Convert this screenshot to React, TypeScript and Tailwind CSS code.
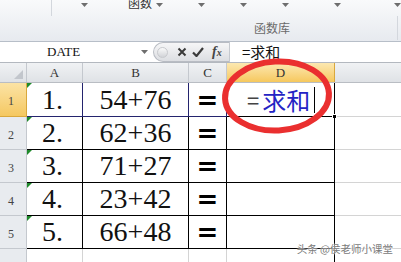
import React from "react";

const rows = [
  { n: "1", a: "1.", b: "54+76" },
  { n: "2", a: "2.", b: "62+36" },
  { n: "3", a: "3.", b: "71+27" },
  { n: "4", a: "4.", b: "23+42" },
  { n: "5", a: "5.", b: "66+48" },
];

const Caret = ({ className = "" }: { className?: string }) => (
  <svg width="7" height="4" viewBox="0 0 7 4" className={className}>
    <path d="M0 0h7L3.5 4z" fill="#6e6e6e" />
  </svg>
);

const GreenTick = () => (
  <svg width="5" height="5" viewBox="0 0 5 5" className="absolute left-0 top-0">
    <path d="M0 0h5L0 5z" fill="#1f8a2c" />
  </svg>
);

export default function App() {
  return (
    <div className="relative w-[401px] h-[262px] overflow-hidden bg-white font-['Liberation_Sans','Noto_Sans_CJK_SC',sans-serif]">
      {/* Ribbon */}
      <div className="h-[42px] border-b border-[#b7bec8] bg-gradient-to-b from-[#f9fafb] to-[#e7eaef]">
        <div className="flex items-start h-[14px]">
          <div className="w-[52px] h-[16px] border-r border-[#d3d7dd]" />
          <div className="ml-[29px] mt-[3px]"><Caret /></div>
          <span className="ml-[40px] -mt-[4px] text-[12px] leading-[14px] text-[#333] font-['Noto_Sans_CJK_SC',sans-serif]">函数</span>
          <div className="ml-[4px] mt-[3px]"><Caret /></div>
          <div className="ml-[35px] mt-[3px]"><Caret /></div>
          <div className="ml-[35px] mt-[3px]"><Caret /></div>
          <div className="ml-[35px] mt-[3px]"><Caret /></div>
          <div className="ml-[45px] mt-[3px]"><Caret /></div>
          <div className="ml-[53px] mt-[3px]"><Caret /></div>
        </div>
        <div className="flex h-[27px] items-center">
          <span className="ml-[254px] mt-[1px] text-[12px] text-[#6a6a6a] font-['Noto_Sans_CJK_SC',sans-serif]">函数库</span>
          <div className="ml-auto mr-[3px] w-px h-[24px] bg-[#d3d7dd]" />
        </div>
      </div>

      {/* Formula bar */}
      <div className="flex h-[21px] border-b border-[#b3b8bf] bg-white">
        <div className="w-[153px] flex items-center">
          <span className="pl-[47px] text-[13px] text-[#111] font-['Liberation_Serif',serif]">DATE</span>
          <Caret className="ml-[61px]" />
        </div>
        <div className="w-[76px] flex items-center rounded-l-full border border-r-0 border-[#b8bcc3] bg-gradient-to-b from-[#f6f6f7] to-[#dcdee2]">
          <div className="ml-[3px] w-[11px] h-[11px] rounded-full bg-gradient-to-b from-[#fafafa] to-[#d2d4d8] border border-[#c7c9cd]" />
          <svg width="10" height="10" viewBox="0 0 10 10" className="ml-[9px]">
            <path d="M1.5 1.5l7 7M8.5 1.5l-7 7" stroke="#3a3a3a" strokeWidth="2" />
          </svg>
          <svg width="12" height="10" viewBox="0 0 12 10" className="ml-[5px]">
            <path d="M1 5.5l3.5 3.5L11 1" stroke="#3a3a3a" strokeWidth="2.2" fill="none" />
          </svg>
          <span className="ml-[8px] text-[14px] leading-none italic font-bold text-[#444] font-['Liberation_Serif',serif]">
            f<span className="text-[10px]">x</span>
          </span>
        </div>
        <div className="flex-1 flex items-center border-l border-[#c5c9cf]">
          <span className="pl-[12px] text-[15px] text-[#111] font-['Noto_Sans_CJK_SC',sans-serif]">=求和</span>
        </div>
      </div>

      {/* Column headers */}
      <div className="flex h-[20px] border-b border-[#b9bdc3] text-[13px] text-[#333] font-['Liberation_Serif',serif]">
        <div className="relative w-[27px] border-r border-[#c4c8ce] bg-gradient-to-b from-[#f0f2f4] to-[#dfe2e6]">
          <svg width="9" height="9" viewBox="0 0 9 9" className="absolute right-[3px] bottom-[3px]">
            <path d="M9 0v9H0z" fill="#c2c6cc" />
          </svg>
        </div>
        <div className="w-[56px] border-r border-[#c4c8ce] bg-gradient-to-b from-[#f0f2f4] to-[#dfe2e6] flex items-center justify-center">A</div>
        <div className="w-[106px] border-r border-[#c4c8ce] bg-gradient-to-b from-[#f0f2f4] to-[#dfe2e6] flex items-center justify-center">B</div>
        <div className="w-[38px] border-r border-[#c4c8ce] bg-gradient-to-b from-[#f0f2f4] to-[#dfe2e6] flex items-center justify-center">C</div>
        <div className="w-[108px] border-r border-[#d9a83c] bg-gradient-to-b from-[#fce8b0] to-[#f6c85c] flex items-center justify-center">D</div>
        <div className="flex-1 bg-gradient-to-b from-[#f0f2f4] to-[#dfe2e6]" />
      </div>

      {/* Rows */}
      {rows.map((r, i) => {
        const first = i === 0;
        const v = first ? "border-[#24246e]" : "border-black";
        return (
          <div key={r.n} className={`flex ${first ? "h-[34px]" : "h-[33px]"}`}>
            <div
              className={`w-[27px] border-r border-b flex items-center pl-[8px] pt-[3px] text-[12px] text-[#444] font-['Liberation_Serif',serif] ${
                first
                  ? "border-[#d9a83c] bg-gradient-to-b from-[#fbe3a4] to-[#f5c860]"
                  : "border-[#c4c8ce] bg-[#e8ebef]"
              }`}
            >
              {r.n}
            </div>
            <div className={`relative w-[56px] border-r border-b ${v} flex items-center pl-[15px] text-[28px] text-[#111] font-['Liberation_Serif',serif]`}>
              <GreenTick />
              {r.a}
            </div>
            <div className={`w-[106px] border-r border-b ${v} flex items-center justify-center text-[28px] text-[#111] font-['Liberation_Serif',serif]`}>
              {r.b}
            </div>
            <div className={`w-[38px] border-r border-b ${v} flex items-center justify-center text-[26px] leading-[28px] font-bold text-black font-['DejaVu_Sans',sans-serif]`}>
              =
            </div>
            <div className="relative w-[108px] border-r border-b border-black flex items-center">
              {first && (
                <>
                  <span className="pl-[20px] text-[22px] text-[#444] font-['Noto_Sans_CJK_SC',sans-serif]">=</span>
                  <span className="pl-[3px] text-[24px] text-[#2424c4] font-['Noto_Sans_CJK_SC',sans-serif]">求和</span>
                  <div className="ml-[4px] w-px h-[26px] bg-black" />
                  <div className="absolute -right-[3px] -bottom-[3px] w-[5px] h-[5px] bg-black border border-white" />
                </>
              )}
            </div>
            <div className="flex-1 border-b border-[#d4d4d4]" />
          </div>
        );
      })}
      <div className="flex h-[20px]">
        <div className="w-[27px] border-r border-[#c4c8ce] bg-[#e8ebef]" />
        <div className="w-[56px] border-r border-[#d4d4d4]" />
        <div className="w-[106px] border-r border-[#d4d4d4]" />
        <div className="w-[38px] border-r border-[#d4d4d4]" />
        <div className="w-[108px] border-r border-black" />
        <div className="flex-1" />
      </div>

      {/* Red ellipse marking */}
      <svg width="401" height="262" className="absolute left-0 top-0 pointer-events-none">
        <ellipse cx="277" cy="96" rx="52" ry="34.5" fill="none" stroke="#ea2f2f" strokeWidth="6" transform="rotate(-3 277 96)" />
      </svg>

      {/* Watermark */}
      <div className="absolute right-[8px] bottom-[8px] text-[10.5px] leading-none text-[#7a7a7a] font-['Noto_Sans_CJK_SC',sans-serif] [text-shadow:0_0_2px_#fff,0_0_2px_#fff]">
        头条 @侯老师小课堂
      </div>
    </div>
  );
}
